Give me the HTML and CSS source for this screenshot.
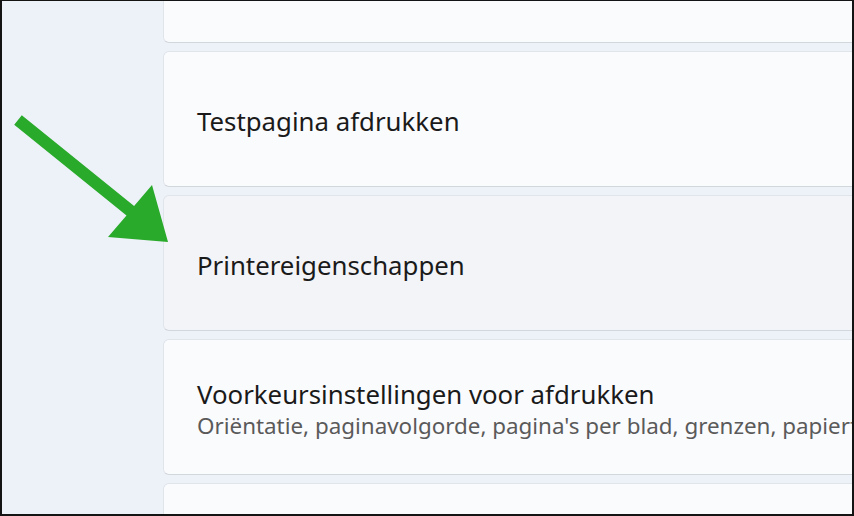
FILE: index.html
```html
<!DOCTYPE html>
<html lang="nl">
  <head>
    <meta charset="UTF-8" />
    <meta name="viewport" content="width=device-width, initial-scale=1.0" />
    <title>Printer</title>
    <link rel="stylesheet" href="styles.css">
  </head>
  <body>
    <div class="frame">
      <div class="list">
        <div class="card"></div>

        <div class="card">
          <div class="title">Testpagina afdrukken</div>
        </div>

        <div class="card hover">
          <div class="title">Printereigenschappen</div>
        </div>

        <div class="card">
          <div class="title">Voorkeursinstellingen voor afdrukken</div>
          <div class="detail">Oriëntatie, paginavolgorde, pagina's per blad, grenzen, papierformaat</div>
        </div>

        <div class="card"></div>
      </div>

      <!-- pointer arrow drawn over the page -->
      <svg class="arrow" width="854" height="516" viewBox="0 0 854 516">
        <polygon points="21.8,115.3 134.1,206 152,185 168,242 108,237 126.5,215.4 14.2,124.7" fill="#29aa2a" />
      </svg>
    </div>
  </body>
</html>
```

FILE: styles.css
```css
* {
  margin: 0;
  padding: 0;
  box-sizing: border-box;
}

body {
  width: 854px;
  height: 516px;
  overflow: hidden;
  font-family: "Noto Sans", "Open Sans", sans-serif;
}

.frame {
  position: relative;
  width: 854px;
  height: 516px;
  overflow: hidden;
  background: #edf1f8;
  border-style: solid;
  border-color: #141414;
  border-width: 1px 2px 2px 2px;
}

.list {
  display: flex;
  flex-direction: column;
  gap: 8px;
  margin-top: -94px;
  padding-left: 161px;
  margin-right: -40px;
}

.card {
  height: 136px;
  background: #fafbfd;
  border: 1px solid #e0e4eb;
  border-bottom-color: #d2d6dd;
  border-radius: 6px;
  display: flex;
  flex-direction: column;
  justify-content: center;
  padding-left: 33px;
  padding-top: 4px;
  white-space: nowrap;
  overflow: hidden;
}

.card.hover {
  background: #f3f4f7;
}

.card .title {
  font-size: 25.8px;
  color: #1a1a1a;
  line-height: 32px;
}

.card .detail {
  font-size: 22.4px;
  color: #5a5a5a;
  line-height: 31px;
}

.arrow {
  position: absolute;
  left: -2px;
  top: -1px;
}
```
